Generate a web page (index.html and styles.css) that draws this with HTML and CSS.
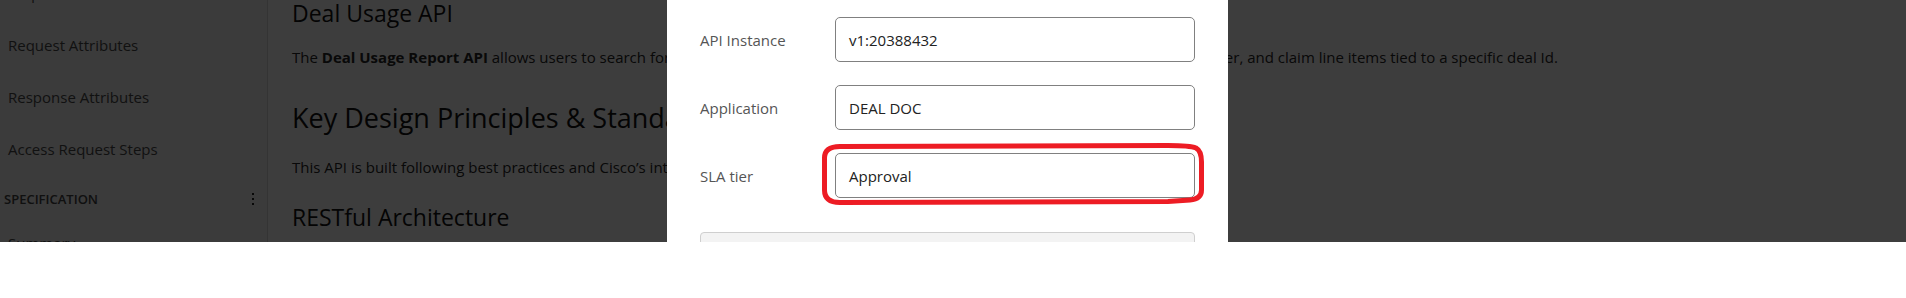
FILE: index.html
```html
<!DOCTYPE html>
<html lang="en">
<head>
<meta charset="utf-8">
<title>Deal Usage API</title>
<link rel="stylesheet" href="styles.css">
</head>
<body>
<div class="app">
  <aside class="sidebar">
    <ul class="nav">
      <li class="nav-item">Request Headers</li>
      <li class="nav-item">Request Attributes</li>
      <li class="nav-item">Response Attributes</li>
      <li class="nav-item">Access Request Steps</li>
      <li class="nav-section">
        <span>SPECIFICATION</span>
        <svg class="kebab" width="2" height="12" viewBox="0 0 2 12"><rect x="0" y="0" width="2" height="2"/><rect x="0" y="5" width="2" height="2"/><rect x="0" y="10" width="2" height="2"/></svg>
      </li>
      <li class="nav-item nav-item-short">Summary</li>
    </ul>
  </aside>
  <main class="content">
    <h3 class="h-sub">Deal Usage API</h3>
    <p class="para p-first">The <strong>Deal Usage Report API</strong> allows users to search for deal usage data, including all bookings, backlog, point of sale (POS), rebate, order, and claim line items tied to a specific deal Id.</p>
    <h2 class="h-main">Key Design Principles &amp; Standards</h2>
    <p class="para p-second">This API is built following best practices and Cisco’s internal API guidelines to ensure consistency, security and reliability.</p>
    <h3 class="h-sub h-last">RESTful Architecture</h3>
  </main>

  <div class="backdrop"></div>

  <div class="modal">
    <div class="form">
      <label class="f-label">API Instance</label>
      <div class="f-input">v1:20388432</div>
      <label class="f-label">Application</label>
      <div class="f-input">DEAL DOC</div>
      <label class="f-label">SLA tier</label>
      <div class="f-input">Approval</div>
    </div>
    <div class="note-box"></div>
  </div>

  <svg class="annot" width="390" height="70" viewBox="0 0 390 70">
    <path d="M 22 6.5 L 350 5.5 Q 372 5.5 378 8 Q 383.5 11 383.5 22 L 383.5 50 Q 383.5 59 372 60 L 350 61.5 L 22 62.5 Q 6.5 62.5 6.5 50 L 6.5 18 Q 6.5 6.5 22 6.5 Z" fill="none" stroke="#ed1c24" stroke-width="5"/>
  </svg>
</div>
</body>
</html>
```

FILE: styles.css
```css
* { box-sizing: border-box; }

html, body {
  margin: 0;
  padding: 0;
  background: #ffffff;
}

body {
  font-family: "Open Sans", "Noto Sans", sans-serif;
  color: #333;
}

.app {
  position: relative;
  display: flex;
  height: 242px;
  overflow: hidden;
  background: #ffffff;
}

/* Sidebar */
.sidebar {
  flex: 0 0 268px;
  background: #f4f4f4;
  border-right: 1px solid #d8d8d8;
}

.nav {
  list-style: none;
  margin: -33px 0 0 0;
  padding: 0;
}

.nav-item {
  height: 52px;
  display: flex;
  align-items: center;
  padding-left: 8px;
  font-size: 15px;
  color: #4a4a4a;
}

.nav-item-short {
  height: 48px;
}

.nav-section {
  height: 44px;
  padding: 4px 13px 0 4px;
  display: flex;
  align-items: center;
  justify-content: space-between;
  font-size: 13px;
  font-weight: 600;
  color: #444;
}

.kebab {
  fill: #222;
}

/* Main content */
.content {
  flex: 1;
  padding-left: 24px;
  margin-top: -1px;
}

.h-sub {
  margin: 0;
  font-size: 23px;
  line-height: 28px;
  font-weight: 400;
  color: #111;
}

.h-main {
  margin: 34px 0 0 0;
  font-size: 27px;
  line-height: 32px;
  font-weight: 400;
  color: #111;
}

.para {
  margin: 0;
  font-size: 15px;
  line-height: 21px;
  color: #262626;
}

.para strong {
  font-weight: 700;
}

.p-first { margin-top: 20px; }
.p-second { margin-top: 23px; }
.h-last { margin-top: 25px; }

/* Backdrop + modal */
.backdrop {
  position: absolute;
  inset: 0;
  background: rgba(0, 0, 0, 0.76);
}

.modal {
  position: absolute;
  left: 667px;
  top: 0;
  width: 561px;
  height: 400px;
  background: #ffffff;
  padding: 17px 33px 0 33px;
}

.form {
  display: grid;
  grid-template-columns: 135px 360px;
  grid-auto-rows: 45px;
  row-gap: 23px;
  align-items: center;
}

.f-label {
  font-size: 15px;
  color: #555;
}

.f-input {
  height: 45px;
  border: 1px solid #808080;
  border-radius: 5px;
  padding: 0 13px;
  display: flex;
  align-items: center;
  font-size: 15px;
  color: #222;
}

.note-box {
  margin-top: 34px;
  width: 495px;
  height: 120px;
  background: #f3f3f3;
  border: 1px solid #cfcfcf;
  border-radius: 4px;
}

/* Annotation */
.annot {
  position: absolute;
  left: 818px;
  top: 140px;
}
```
